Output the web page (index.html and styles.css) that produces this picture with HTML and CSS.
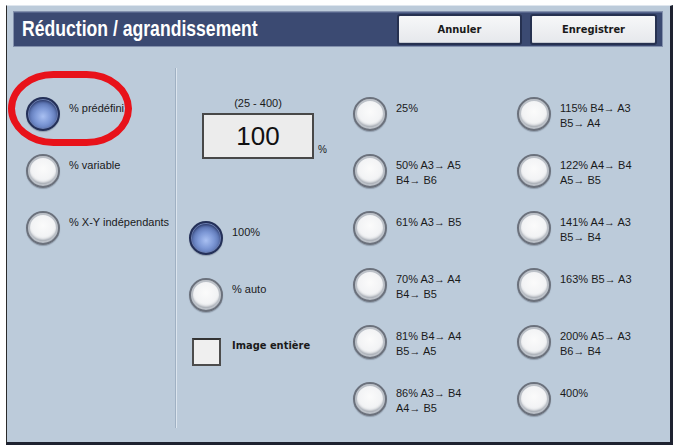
FILE: index.html
```html
<!DOCTYPE html>

<html>

<head>
    <title>Réduction / agrandissement</title>
    <link rel="stylesheet" href="styles.css">
</head>

<body>
    <div class="panel">
        <div class="header">
            <div class="title"><span class="title-text">Réduction / agrandissement</span></div>
            <button class="header-button">Annuler</button>
            <button class="header-button wide">Enregistrer</button>
        </div>

        <div class="content">
            <div class="column mode-column">
                <div class="option"><span class="radio selected"></span><span class="label">% prédéfini</span></div>
                <div class="option"><span class="radio"></span><span class="label">% variable</span></div>
                <div class="option"><span class="radio"></span><span class="label">% X-Y indépendants</span></div>
            </div>

            <div class="separator"></div>

            <div class="column value-column">
                <div class="value-block">
                    <div class="range">(25 - 400)</div>
                    <div class="value-row">
                        <div class="value-box">100</div>
                        <span class="unit">%</span>
                    </div>
                </div>
                <div class="option"><span class="radio selected"></span><span class="label">100%</span></div>
                <div class="option"><span class="radio"></span><span class="label">% auto</span></div>
                <div class="option check-option"><span class="checkbox"></span><span class="label bold">Image entière</span></div>
            </div>

            <div class="column preset-column">
                <div class="option"><span class="radio"></span><span class="label">25%</span></div>
                <div class="option"><span class="radio"></span><span class="label">50% A3→ A5<br>B4→ B6</span></div>
                <div class="option"><span class="radio"></span><span class="label">61% A3→ B5</span></div>
                <div class="option"><span class="radio"></span><span class="label">70% A3→ A4<br>B4→ B5</span></div>
                <div class="option"><span class="radio"></span><span class="label">81% B4→ A4<br>B5→ A5</span></div>
                <div class="option"><span class="radio"></span><span class="label">86% A3→ B4<br>A4→ B5</span></div>
            </div>

            <div class="column preset-column last">
                <div class="option"><span class="radio"></span><span class="label">115% B4→ A3<br>B5→ A4</span></div>
                <div class="option"><span class="radio"></span><span class="label">122% A4→ B4<br>A5→ B5</span></div>
                <div class="option"><span class="radio"></span><span class="label">141% A4→ A3<br>B5→ B4</span></div>
                <div class="option"><span class="radio"></span><span class="label">163% B5→ A3</span></div>
                <div class="option"><span class="radio"></span><span class="label">200% A5→ A3<br>B6→ B4</span></div>
                <div class="option"><span class="radio"></span><span class="label">400%</span></div>
            </div>
        </div>

        <!-- cercle rouge de mise en évidence -->
        <div class="highlight"></div>
    </div>
</body>

</html>
```

FILE: styles.css
```css
body {
    margin: 0;
    background-color: #ffffff;
    font-family: "Liberation Sans", Arial, sans-serif;
}

.panel {
    position: relative;
    margin: 5px 0 0 6px;
    width: 663px;
    height: 436px;
    background-color: #bccbda;
    border-top: 1px solid #dfe6ee;
    border-left: 1px solid #2a2a2a;
    border-right: 3px solid #1e2230;
    border-bottom: 3px solid #1e2230;
}

.header {
    display: flex;
    align-items: center;
    margin: 5px 7px 0 6px;
    height: 36px;
    box-sizing: border-box;
    background-color: #3b4a72;
    border: 1px solid #8391ad;
    box-shadow: inset 0 1px 0 #56658c;
}

.title {
    flex: 1;
    padding-left: 8px;
    overflow: hidden;
    white-space: nowrap;
}

.title-text {
    display: inline-block;
    transform: scaleX(0.8);
    transform-origin: left center;
    color: #ffffff;
    font-weight: bold;
    font-size: 22px;
}

.header-button {
    width: 125px;
    height: 31px;
    margin-right: 8px;
    padding: 0;
    border: 2px solid #263150;
    border-radius: 3px;
    background: linear-gradient(#f6f7f8, #e6e8ec);
    box-shadow: inset 0 -1px 0 #c4c8d0;
    color: #1a1a1a;
    font-family: "DejaVu Sans Condensed", "Liberation Sans", sans-serif;
    font-weight: bold;
    font-size: 11px;
}

.header-button.wide {
    width: 127px;
    margin-right: 5px;
}

.content {
    display: flex;
    height: 360px;
    padding: 21px 0 14px 0;
    font-size: 11px;
    color: #1a1a1a;
}

.column {
    padding-top: 18px;
}

.mode-column {
    width: 149px;
    padding-left: 19px;
}

.separator {
    width: 0;
    border-left: 1px solid #a0b1c3;
    border-right: 1px solid #dce5ee;
}

.value-column {
    width: 164px;
    padding-left: 12px;
}

.preset-column {
    width: 164px;
}

.preset-column.last {
    flex: 1;
}

.option {
    display: flex;
    align-items: flex-start;
    height: 57px;
    box-sizing: border-box;
    padding-top: 11px;
}

.label {
    padding-top: 4px;
    padding-left: 9px;
    line-height: 15px;
    white-space: nowrap;
}

.bold {
    font-weight: bold;
    padding-top: 0;
    padding-left: 11px;
    font-family: "DejaVu Sans Condensed", "Liberation Sans", sans-serif;
}

.radio {
    flex: none;
    width: 34px;
    height: 34px;
    box-sizing: border-box;
    border-radius: 50%;
    border: 2px solid #6b717c;
    background: radial-gradient(circle at 50% 42%, #fbfbfb 0, #f1f2f4 55%, #e0e3e7 75%, #c8ccd2 100%);
    box-shadow: inset 0 0 0 2px #bcc1c8, inset 0 -3px 3px #959ba4, 0 1px 1px #8f9cab;
}

.radio.selected {
    border-color: #243058;
    background: radial-gradient(circle at 50% 58%, #a9c0f2 0, #7d98d6 35%, #5068a6 70%, #334478 100%);
    box-shadow: inset 0 0 0 1px #6d7fb0, inset 0 2px 3px #28345e, 0 1px 1px #8f9cab;
}

.check-option {
    padding-top: 14px;
}

.checkbox {
    flex: none;
    width: 29px;
    height: 28px;
    margin-left: 3px;
    box-sizing: border-box;
    border: 2px solid #4c4c4c;
    border-top-color: #333333;
    background-color: #efefef;
}

.value-block {
    height: 114px;
}

.range {
    width: 112px;
    margin: 10px 0 0 13px;
    line-height: 14px;
    text-align: center;
}

.value-row {
    display: flex;
    align-items: flex-end;
    margin: 3px 0 0 13px;
}

.value-box {
    width: 112px;
    height: 46px;
    box-sizing: border-box;
    border: 2px solid #484848;
    background-color: #ececec;
    font-size: 26px;
    line-height: 42px;
    text-align: center;
    color: #111111;
}

.unit {
    margin: 0 0 4px 4px;
    font-size: 10px;
}

.highlight {
    position: absolute;
    left: 1px;
    top: 65px;
    width: 110px;
    height: 61px;
    border: 7px solid #e8121a;
    border-radius: 46px / 38px;
}
```
